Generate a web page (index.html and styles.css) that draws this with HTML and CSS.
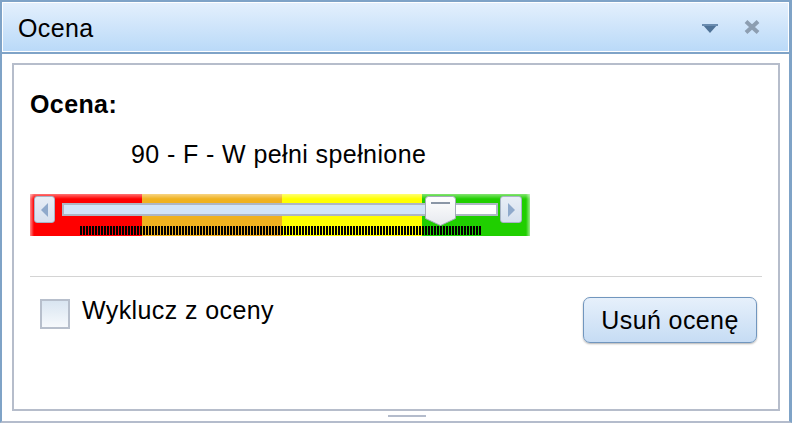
FILE: index.html
```html
<!DOCTYPE html>
<html lang="pl">
<head>
<meta charset="utf-8">
<title>Ocena</title>
<link rel="stylesheet" href="styles.css">
</head>
<body>
<div class="window">
  <div class="header">
    <div class="title">Ocena</div>
    <svg class="icon-collapse" width="16" height="10" viewBox="0 0 16 10"><polygon points="0,0 16,0 8,9" fill="#4f7398"/><rect x="0" y="0" width="16" height="2" fill="#6a8cb0"/></svg>
    <svg class="icon-close" width="18" height="14" viewBox="0 0 18 14"><path d="M3 1.5 L15 12.5 M15 1.5 L3 12.5" stroke="#8d9eb1" stroke-width="4" stroke-linecap="butt"/></svg>
  </div>
  <div class="body">
    <div class="panel">
      <div class="label">Ocena:</div>
      <div class="value">90 - F - W pełni spełnione</div>
      <div class="slider">
        <div class="bands">
          <div class="band band-red"></div>
          <div class="band band-orange"></div>
          <div class="band band-yellow"></div>
          <div class="band band-green"></div>
        </div>
        <div class="arrow arrow-left"><svg width="10" height="14" viewBox="0 0 10 14"><polygon points="8,0 8,14 1,7" fill="#8fa9cb"/></svg></div>
        <div class="track"><div class="track-fill" style="width:365px"></div></div>
        <div class="ticks"></div>
        <svg class="thumb" width="31" height="30" viewBox="0 0 31 30">
          <defs><linearGradient id="tg" x1="0" y1="0" x2="0" y2="1"><stop offset="0" stop-color="#ffffff"/><stop offset="1" stop-color="#e6e9ee"/></linearGradient></defs>
          <path d="M0.5 3.5 Q0.5 0.5 3.5 0.5 L27.5 0.5 Q30.5 0.5 30.5 3.5 L30.5 22.5 L15.5 29.5 L0.5 22.5 Z" fill="url(#tg)" stroke="#a3abb7"/>
          <rect x="6" y="6" width="19" height="2" fill="#8a96a6"/>
        </svg>
        <div class="arrow arrow-right"><svg width="10" height="14" viewBox="0 0 10 14"><polygon points="2,0 2,14 9,7" fill="#8fa9cb"/></svg></div>
      </div>
      <div class="sep"></div>
      <div class="row">
        <div class="checkbox"></div>
        <div class="check-label">Wyklucz z oceny</div>
        <button class="btn">Usuń ocenę</button>
      </div>
    </div>
    <div class="footer"><div class="handle"></div></div>
  </div>
</div>
</body>
</html>
```

FILE: styles.css
```css
html, body {
  margin: 0;
  padding: 0;
  background: #ffffff;
}

body {
  font-family: "Liberation Sans", Arial, sans-serif;
  font-size: 25px;
  line-height: 30px;
  letter-spacing: 0.4px;
  color: #000;
}

.window {
  width: 792px;
  height: 423px;
  box-sizing: border-box;
  border-style: solid;
  border-color: #7fa3c7;
  border-width: 2px 3px 2px 2px;
  border-bottom-color: #b4bccc;
  display: flex;
  flex-direction: column;
  background: #fff;
}

.header {
  height: 52px;
  box-sizing: border-box;
  flex: none;
  display: flex;
  align-items: flex-start;
  padding: 0 28px 0 16px;
  background: linear-gradient(#e4f0fd, #b9d9f8);
  border-bottom: 2px solid #7fa3c7;
  box-shadow: inset 1px 1px 0 #ffffff, inset -1px 0 0 #ffffff, inset 0 -1px 0 #ffffff;
}

.title {
  margin-top: 11px;
  flex: 1;
}

.icon-collapse {
  margin-top: 22px;
  display: block;
}

.icon-close {
  margin-top: 18px;
  margin-left: 25px;
  display: block;
}

.body {
  flex: 1;
  display: flex;
  flex-direction: column;
  padding: 9px 9px 0 10px;
}

.panel {
  flex: 1;
  border: 2px solid #b6bdcb;
  padding: 24px 16px 0 16px;
  display: flex;
  flex-direction: column;
}

.label {
  font-weight: bold;
}

.value {
  margin-top: 20px;
  margin-left: 101px;
}

.slider {
  margin-top: 25px;
  width: 500px;
  height: 42px;
  position: relative;
}

.bands {
  display: flex;
  height: 100%;
  position: relative;
}

.bands::after {
  content: "";
  position: absolute;
  inset: 0;
  background:
    linear-gradient(rgba(255,255,255,0.45), rgba(255,255,255,0) 5px),
    linear-gradient(to right, rgba(255,255,255,0.55), rgba(255,255,255,0) 4px),
    linear-gradient(to left, rgba(255,255,255,0.55), rgba(255,255,255,0) 4px);
}

.band {
  height: 100%;
}

.band-red { width: 112px; background: #ff0000; }
.band-orange { width: 140px; background: #f0b21f; }
.band-yellow { width: 140px; background: #ffff00; }
.band-green { width: 108px; background: #20cf00; }

.arrow {
  position: absolute;
  top: 2px;
  width: 21px;
  height: 27px;
  box-sizing: border-box;
  border: 1px solid #a8b4c6;
  border-radius: 3px;
  background: linear-gradient(#e8eef6, #d6e0ee);
  display: flex;
  align-items: center;
  justify-content: center;
}

.arrow svg { display: block; }

.arrow-left { left: 4px; }
.arrow-right { left: 470px; width: 22px; }

.track {
  position: absolute;
  left: 32px;
  top: 9px;
  width: 436px;
  height: 13px;
  box-sizing: border-box;
  border: 2px solid #aeb7c4;
  background: #ffffff;
}

.track-fill {
  height: 100%;
  background: #d2e5f8;
}

.thumb {
  position: absolute;
  left: 395px;
  top: 2px;
  display: block;
}

.ticks {
  position: absolute;
  left: 50px;
  top: 32px;
  width: 402px;
  height: 9px;
  background: repeating-linear-gradient(to right, #000 0 2px, transparent 2px 3px);
}

.sep {
  margin-top: 40px;
  height: 1px;
  background: #d4d4d4;
}

.row {
  margin-top: 18px;
  display: flex;
  align-items: flex-start;
}

.checkbox {
  margin-top: 4px;
  margin-left: 10px;
  width: 30px;
  height: 30px;
  box-sizing: border-box;
  border: 2px solid #b7bfcc;
  background: linear-gradient(#d9e5f1, #f6f9fc);
}

.check-label {
  margin-left: 12px;
}

.btn {
  margin-left: auto;
  margin-right: 5px;
  margin-top: 2px;
  width: 174px;
  height: 46px;
  font: inherit;
  letter-spacing: inherit;
  line-height: 30px;
  color: #000;
  padding: 0;
  border: 1px solid #7196be;
  border-radius: 7px;
  background: linear-gradient(#e6f0fb, #c6dcf4);
  box-shadow: 0 1px 2px rgba(0, 0, 0, 0.3);
}

.footer {
  height: 10px;
  flex: none;
  display: flex;
  align-items: center;
}

.handle {
  margin-left: 376px;
  width: 38px;
  height: 2px;
  background: #b4bccc;
}
```
